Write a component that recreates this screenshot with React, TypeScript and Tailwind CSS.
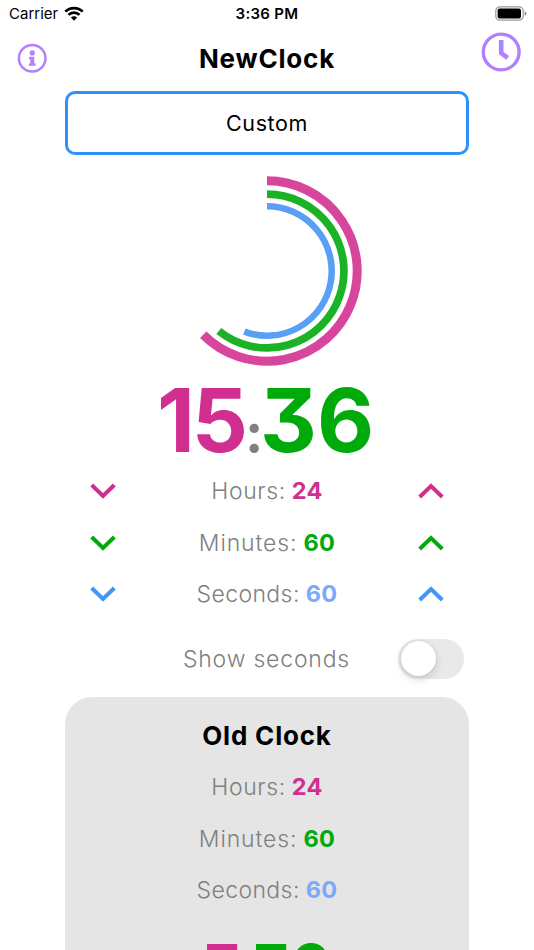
import React, { useState } from 'react';

interface ArcProps {
  radius: number;
  width: number;
  degrees: number;
  color: string;
}

function Arc({ radius, width, degrees, color }: ArcProps) {
  const angle = (degrees * Math.PI) / 180;
  const x = 100 + radius * Math.sin(angle);
  const y = 100 - radius * Math.cos(angle);
  const large = degrees > 180 ? 1 : 0;

  return (
    <path
      d={`M100 ${100 - radius}A${radius} ${radius} 0 ${large} 1 ${x} ${y}`}
      fill="none"
      stroke={color}
      strokeWidth={width}
    />
  );
}

interface ChevronProps {
  up?: boolean;
  className: string;
}

function Chevron({ up, className }: ChevronProps) {
  return (
    <svg viewBox="0 0 26 16" className={`h-4 w-[26px] ${className}`} fill="none" stroke="currentColor" strokeWidth="4">
      <path d={up ? 'M1.7 14 13 3 24.3 14' : 'M1.7 2 13 13 24.3 2'} />
    </svg>
  );
}

interface Unit {
  label: string;
  value: number;
  arrow: string;
  text: string;
  tracking: string;
}

const units: Unit[] = [
  { label: 'Hours:', value: 24, arrow: 'text-[#d12f90]', text: 'text-[#d12f90]', tracking: 'tracking-[0.6px]' },
  { label: 'Minutes:', value: 60, arrow: 'text-[#00aa0b]', text: 'text-[#00aa0b]', tracking: 'tracking-[0.9px]' },
  { label: 'Seconds:', value: 60, arrow: 'text-[#4594f7]', text: 'text-[#7ba9fb]', tracking: 'tracking-[0.4px]' },
];

function UnitText({ unit }: { unit: Unit }) {
  return (
    <p className="flex items-baseline gap-[6px] text-[23px] leading-8 whitespace-nowrap">
      <span className={`font-light text-[#808080] ${unit.tracking}`}>{unit.label}</span>
      <span className={`text-[23.5px] font-bold tracking-[0.3px] ${unit.text}`}>{unit.value}</span>
    </p>
  );
}

function StatusBar() {
  return (
    <div className="grid h-7 shrink-0 grid-cols-3 items-center pr-[7px] pl-[9px] text-[15px]">
      <div className="flex items-center gap-[6px]">
        <span>Carrier</span>
        <svg viewBox="0 0 20 15" className="mb-[2px] h-[15px] w-5" fill="none" stroke="black" strokeWidth="2.7">
          <path d="M1.3 5.6a12.4 12.4 0 0 1 17.4 0M4.5 8.9a7.8 7.8 0 0 1 11 0" />
          <path d="M10 14.7 6.9 11.6a4.4 4.4 0 0 1 6.2 0z" fill="black" stroke="none" />
        </svg>
      </div>
      <span className="mr-[2px] text-center font-semibold tracking-[0.3px]">3:36 PM</span>
      <svg viewBox="0 0 32 15" className="mb-[2px] h-[15px] w-8 justify-self-end" fill="none">
        <rect x="0.8" y="0.8" width="27.4" height="13.4" rx="4" stroke="#999" strokeWidth="1.2" />
        <rect x="2.6" y="2.6" width="23.4" height="9.8" rx="2" fill="black" />
        <path d="M29.6 5.2q1.8.8 1.8 2.3t-1.8 2.3z" fill="#888" />
      </svg>
    </div>
  );
}

function Header() {
  return (
    <header className="flex h-[63px] shrink-0 items-start justify-between pr-[13px] pl-[17px]">
      <svg viewBox="0 0 30 30" className="mt-[15px] h-[30px] w-[30px] text-[#b080ff]" fill="none">
        <circle cx="15.2" cy="15.3" r="13.3" stroke="currentColor" strokeWidth="2.5" />
        <circle cx="15.3" cy="9.9" r="2.6" fill="currentColor" />
        <path d="M12.1 13.8h5.2v6.6h1.3v2.3h-6.7v-2.3h1.4v-4.2h-1.2z" fill="currentColor" />
      </svg>
      <h1 className="mt-[15px] ml-[6px] text-[26px] leading-8 font-bold tracking-[0.8px]">NewClock</h1>
      <svg viewBox="0 0 40 40" className="mt-1 h-10 w-10 text-[#b080ff]" fill="none" stroke="currentColor">
        <circle cx="20.2" cy="20" r="17.9" strokeWidth="3.4" />
        <path d="M20.2 8v13.2l6.5 4.7" strokeWidth="4.6" strokeLinejoin="round" />
      </svg>
    </header>
  );
}

function App() {
  const [showSeconds, setShowSeconds] = useState(false);

  return (
    <div className="flex h-[950px] w-[534px] flex-col overflow-hidden bg-white font-[Inter,sans-serif] text-black">
      <StatusBar />
      <Header />
      <main className="mx-[65px] flex flex-col">
        <button className="h-16 w-[404px] rounded-[10px] border-[3px] border-[#2f92fb] text-[21.5px] tracking-[0.6px]">
          Custom
        </button>

        <svg viewBox="0 0 200 200" className="mt-[16.4px] h-[200px] w-[200px] self-center">
          <Arc radius={90.2} width={9} degrees={225} color="#d7459c" />
          <Arc radius={76.9} width={7.7} degrees={218.8} color="#1bb226" />
          <Arc radius={64.7} width={6.5} degrees={200.5} color="#589ff5" />
        </svg>

        <div className="mt-[5px] mr-[3px] flex h-[88px] items-baseline justify-center text-[88px] leading-[88px] font-bold [font-feature-settings:'cv09']">
          <span className="tracking-[-3px] text-[#d12f90]">15</span>
          <span className="flex w-[15px] justify-center pl-[3px] text-[55px] text-[#808080]">:</span>
          <span className="text-[#00aa0b]">36</span>
        </div>

        <div className="mt-px flex flex-col">
          {units.map((unit) => (
            <div key={unit.label} className="flex h-[51.5px] items-center justify-between px-[25px]">
              <button aria-label={`Decrease ${unit.label}`}>
                <Chevron className={unit.arrow} />
              </button>
              <UnitText unit={unit} />
              <button aria-label={`Increase ${unit.label}`}>
                <Chevron up className={unit.arrow} />
              </button>
            </div>
          ))}
        </div>

        <div className="mt-[19px] flex h-10 items-center justify-end gap-12 pr-[5px]">
          <span className="text-[23px] font-light tracking-[0.8px] text-[#808080]">Show seconds</span>
          <button
            role="switch"
            aria-checked={showSeconds}
            aria-label="Show seconds"
            onClick={() => setShowSeconds(!showSeconds)}
            className={`flex h-10 w-[66px] items-center rounded-full p-[2.5px] ${showSeconds ? 'justify-end bg-green-500' : 'bg-[#e9e9eb]'}`}
          >
            <span className="h-[35px] w-[35px] rounded-full bg-white shadow-[0_3px_8px_rgba(0,0,0,0.15),0_0_2px_rgba(0,0,0,0.12)]" />
          </button>
        </div>

        <section className="mt-[18px] flex h-[400px] flex-col items-center rounded-[27px] bg-[#e5e5e5] pt-[23px]">
          <h2 className="text-[26px] leading-8 font-bold tracking-[0.8px]">Old Clock</h2>
          <div className="mt-[9.5px] flex flex-col items-center">
            {units.map((unit) => (
              <div key={unit.label} className="flex h-[51.5px] items-center">
                <UnitText unit={unit} />
              </div>
            ))}
          </div>
          <div className="mt-5 mr-[3px] flex h-[62px] items-baseline text-[62px] leading-[62px] font-bold [font-feature-settings:'cv09']">
            <span className="text-[#d12f90]">3</span>
            <span className="flex w-[9px] justify-center text-[39px] text-[#808080]">:</span>
            <span className="tracking-[-1px] text-[#00aa0b]">36</span>
          </div>
        </section>
      </main>
    </div>
  );
}

export default App;
